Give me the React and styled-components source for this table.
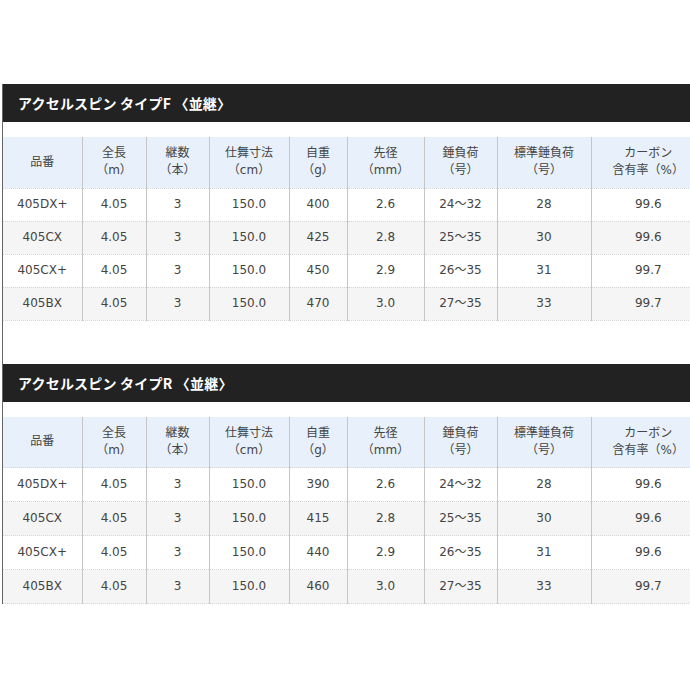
import React from "react";
import styled, { createGlobalStyle } from "styled-components";

const Global = createGlobalStyle`
  html, body { margin: 0; padding: 0; background: #fff; overflow: hidden; }
  body { font-family: "DejaVu Sans", "Noto Sans CJK JP", sans-serif; }
`;

const Page = styled.div`
  width: 690px;
  height: 690px;
  overflow: hidden;
  padding-top: 84px;
  box-sizing: border-box;
`;

const Frame = styled.div`
  margin-left: 2px;
  width: 703px;
  border-left: 1px solid #666;
  display: flex;
  flex-direction: column;
  gap: 43px;
`;

const Section = styled.section`
  display: flex;
  flex-direction: column;
`;

const Title = styled.h2`
  margin: 0 0 15px;
  height: 38px;
  background: #222;
  color: #fff;
  font-family: "Noto Sans CJK JP", sans-serif;
  font-size: 14px;
  font-weight: 700;
  line-height: 38px;
  padding-left: 15px;
  letter-spacing: 0.2px;
`;

const Table = styled.table`
  border-collapse: collapse;
  table-layout: fixed;
  width: 702px;
  font-size: 12px;
  color: #444;
`;

const Th = styled.th`
  background: #e8f1fb;
  font-weight: 400;
  line-height: 17px;
  height: 51px;
  padding: 0 2px;
  box-sizing: border-box;
  text-align: center;
  border-left: ${(p) => (p.$first ? "none" : "1px solid #c6c6c6")};
  border-bottom: 1px dotted #d6d6d6;
`;

const Tr = styled.tr`
  background: ${(p) => (p.$alt ? "#f5f5f5" : "#fff")};
`;

const Td = styled.td`
  height: ${(p) => p.$h}px;
  padding: 0 2px;
  box-sizing: border-box;
  text-align: center;
  line-height: 17px;
  border-left: ${(p) => (p.$first ? "none" : "1px solid #c6c6c6")};
  border-bottom: 1px dotted #d6d6d6;
`;

const widths = [79, 64, 63, 80, 58, 77, 73, 94, 114];

const headers = [
  ["品番"],
  ["全長", "（m）"],
  ["継数", "（本）"],
  ["仕舞寸法", "（cm）"],
  ["自重", "（g）"],
  ["先径", "（mm）"],
  ["錘負荷", "（号）"],
  ["標準錘負荷", "（号）"],
  ["カーボン", "含有率（%）"],
];

const tables = [
  {
    title: "アクセルスピン タイプF 〈並継〉",
    rowH: 33,
    rows: [
      ["405DX+", "4.05", "3", "150.0", "400", "2.6", "24～32", "28", "99.6"],
      ["405CX", "4.05", "3", "150.0", "425", "2.8", "25～35", "30", "99.6"],
      ["405CX+", "4.05", "3", "150.0", "450", "2.9", "26～35", "31", "99.7"],
      ["405BX", "4.05", "3", "150.0", "470", "3.0", "27～35", "33", "99.7"],
    ],
  },
  {
    title: "アクセルスピン タイプR 〈並継〉",
    rowH: 34,
    rows: [
      ["405DX+", "4.05", "3", "150.0", "390", "2.6", "24～32", "28", "99.6"],
      ["405CX", "4.05", "3", "150.0", "415", "2.8", "25～35", "30", "99.6"],
      ["405CX+", "4.05", "3", "150.0", "440", "2.9", "26～35", "31", "99.6"],
      ["405BX", "4.05", "3", "150.0", "460", "3.0", "27～35", "33", "99.7"],
    ],
  },
];

function SpecTable({ title, rows, rowH }) {
  return (
    <Section>
      <Title>{title}</Title>
      <Table>
        <colgroup>
          {widths.map((w, i) => (
            <col key={i} style={{ width: w }} />
          ))}
        </colgroup>
        <thead>
          <tr>
            {headers.map((h, i) => (
              <Th key={i} $first={i === 0}>
                {h.map((line, j) => (
                  <React.Fragment key={j}>
                    {j > 0 && <br />}
                    {line}
                  </React.Fragment>
                ))}
              </Th>
            ))}
          </tr>
        </thead>
        <tbody>
          {rows.map((r, ri) => (
            <Tr key={ri} $alt={ri % 2 === 1}>
              {r.map((c, ci) => (
                <Td key={ci} $first={ci === 0} $h={rowH}>
                  {c}
                </Td>
              ))}
            </Tr>
          ))}
        </tbody>
      </Table>
    </Section>
  );
}

export default function App() {
  return (
    <Page>
      <Global />
      <Frame>
        {tables.map((t, i) => (
          <SpecTable key={i} {...t} />
        ))}
      </Frame>
    </Page>
  );
}
